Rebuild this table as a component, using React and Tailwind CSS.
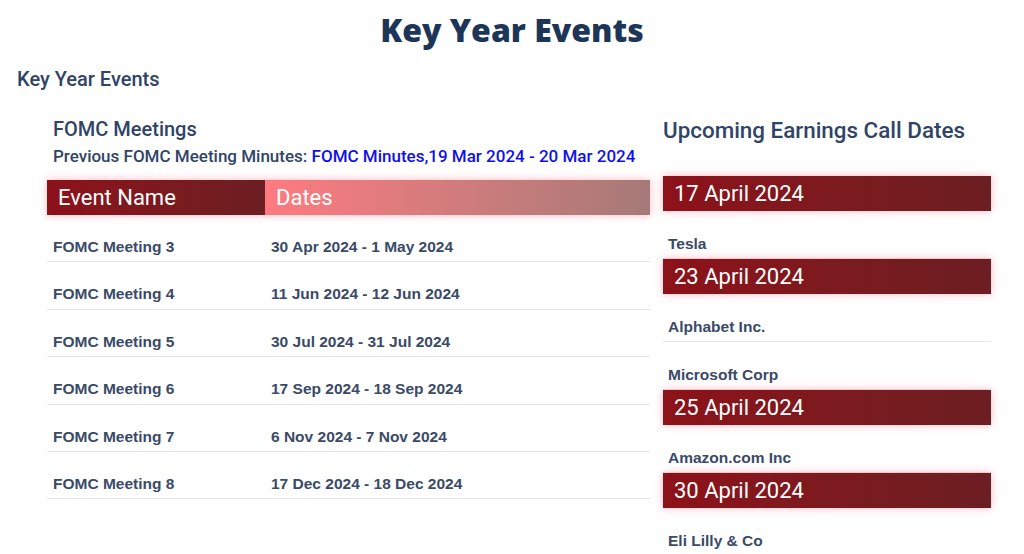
import React from "react";

const meetings = [
  { name: "FOMC Meeting 3", dates: "30 Apr 2024 - 1 May 2024" },
  { name: "FOMC Meeting 4", dates: "11 Jun 2024 - 12 Jun 2024" },
  { name: "FOMC Meeting 5", dates: "30 Jul 2024 - 31 Jul 2024" },
  { name: "FOMC Meeting 6", dates: "17 Sep 2024 - 18 Sep 2024" },
  { name: "FOMC Meeting 7", dates: "6 Nov 2024 - 7 Nov 2024" },
  { name: "FOMC Meeting 8", dates: "17 Dec 2024 - 18 Dec 2024" },
];

const earnings = [
  { date: "17 April 2024", companies: ["Tesla"] },
  { date: "23 April 2024", companies: ["Alphabet Inc.", "Microsoft Corp"] },
  { date: "25 April 2024", companies: ["Amazon.com Inc"] },
  { date: "30 April 2024", companies: ["Eli Lilly & Co"] },
];

const DateBar = ({ children }) => (
  <div className="h-[35px] flex items-center pl-[11px] bg-gradient-to-r from-[#8d1119] to-[#6c1e22] text-white text-[22px] shadow-[0_0_8px_rgba(255,90,120,0.45)] font-['Roboto',sans-serif]">
    {children}
  </div>
);

const App = () => {
  return (
    <div className="w-[1024px] h-[554px] bg-white overflow-hidden">
      {/* PAGE TITLE */}
      <h1 className="pt-[10px] text-center text-[32px] leading-[40px] font-extrabold text-[#1d3557] font-['Open_Sans',sans-serif]">
        Key Year Events
      </h1>
      <h2 className="mt-[16px] ml-[17px] text-[20px] leading-[26px] font-medium text-[#2f4468] font-['Roboto',sans-serif]">
        Key Year Events
      </h2>

      <div className="flex mt-[25px] ml-[47px] gap-[13px]">
        {/* FOMC */}
        <div className="w-[603px]">
          <div className="pl-[6px] text-[20px] leading-[24px] font-medium text-[#2f4468] font-['Roboto',sans-serif]">
            FOMC Meetings
          </div>
          <div className="pl-[6px] mt-[5px] text-[17px] leading-[20px] font-medium text-[#2f4468] font-['Roboto',sans-serif]">
            Previous FOMC Meeting Minutes:{" "}
            <span className="text-[#1010ee]">FOMC Minutes,19 Mar 2024 - 20 Mar 2024</span>
          </div>

          <div className="mt-[14px] flex h-[35px] text-white text-[22px] shadow-[0_0_8px_rgba(255,90,120,0.45)] font-['Roboto',sans-serif]">
            <div className="w-[218px] flex items-center pl-[11px] bg-gradient-to-r from-[#8d1119] to-[#6c1e22]">
              Event Name
            </div>
            <div className="flex-1 flex items-center pl-[11px] bg-gradient-to-r from-[#fd7a80] to-[#a57a78]">
              Dates
            </div>
          </div>

          {meetings.map((m) => (
            <div
              key={m.name}
              className="flex pt-[23px] pb-[6.4px] border-b border-[#e6e6e6] text-[15.5px] leading-[17px] font-bold text-[#3a4a68] font-['Liberation_Sans',sans-serif]"
            >
              <div className="w-[224px] pl-[6px]">{m.name}</div>
              <div>{m.dates}</div>
            </div>
          ))}
        </div>

        {/* EARNINGS */}
        <div className="w-[328px]">
          <div className="text-[22.4px] leading-[26px] font-medium text-[#2f4468] font-['Roboto',sans-serif]">
            Upcoming Earnings Call Dates
          </div>
          <div className="mt-[33px]">
            {earnings.map((e) => (
              <div key={e.date}>
                <DateBar>{e.date}</DateBar>
                {e.companies.map((c) => (
                  <div
                    key={c}
                    className="pl-[5px] pt-[24px] pb-[6px] border-b border-[#e6e6e6] text-[15.5px] leading-[17px] font-bold text-[#3a4a68] font-['Liberation_Sans',sans-serif]"
                  >
                    {c}
                  </div>
                ))}
              </div>
            ))}
          </div>
        </div>
      </div>
    </div>
  );
};

export default App;
